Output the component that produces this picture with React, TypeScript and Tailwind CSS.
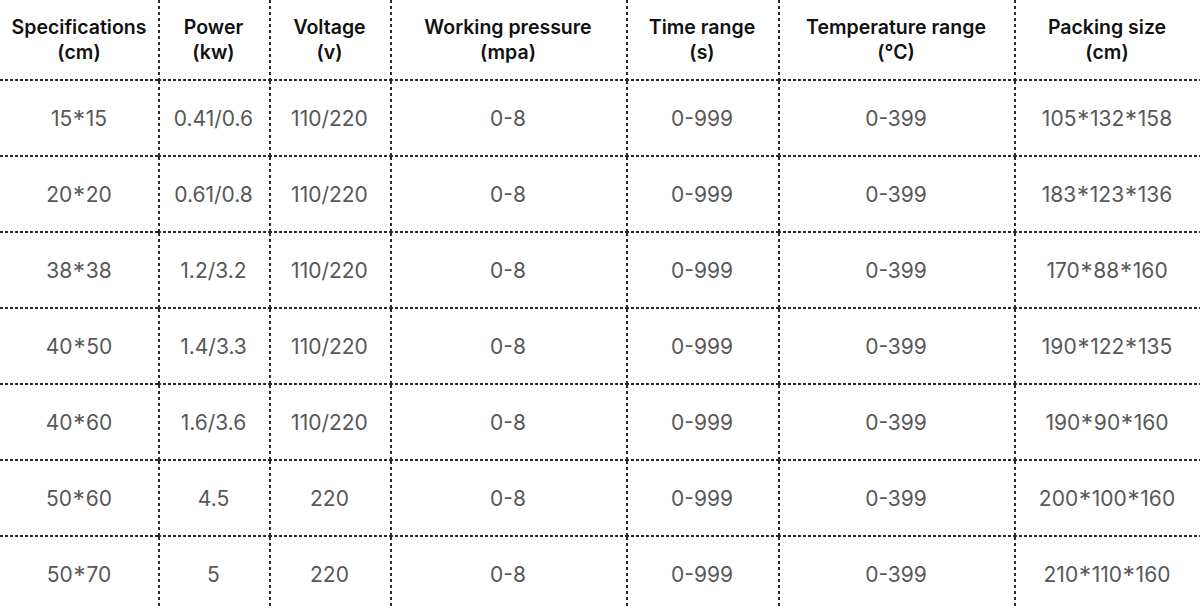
import React from "react";

const headers: [string, string][] = [
  ["Specifications", "(cm)"],
  ["Power", "(kw)"],
  ["Voltage", "(v)"],
  ["Working pressure", "(mpa)"],
  ["Time range", "(s)"],
  ["Temperature range", "(°C)"],
  ["Packing size", "(cm)"],
];

const rows: string[][] = [
  ["15*15", "0.41/0.6", "110/220", "0-8", "0-999", "0-399", "105*132*158"],
  ["20*20", "0.61/0.8", "110/220", "0-8", "0-999", "0-399", "183*123*136"],
  ["38*38", "1.2/3.2", "110/220", "0-8", "0-999", "0-399", "170*88*160"],
  ["40*50", "1.4/3.3", "110/220", "0-8", "0-999", "0-399", "190*122*135"],
  ["40*60", "1.6/3.6", "110/220", "0-8", "0-999", "0-399", "190*90*160"],
  ["50*60", "4.5", "220", "0-8", "0-999", "0-399", "200*100*160"],
  ["50*70", "5", "220", "0-8", "0-999", "0-399", "210*110*160"],
];

const widths = ["w-[158px]", "w-[111px]", "w-[121px]", "w-[236px]", "w-[152px]", "w-[236px]", "w-[186px]"];

// dotted line backgrounds
const bottomLeft =
  "[background:repeating-linear-gradient(to_right,#2a2a2a_0_3px,transparent_3px_5px)_left_bottom/100%_2px_no-repeat,repeating-linear-gradient(to_bottom,#2a2a2a_0_3px,transparent_3px_6px)_left_top/2px_100%_no-repeat]";
const bottomOnly =
  "[background:repeating-linear-gradient(to_right,#2a2a2a_0_3px,transparent_3px_5px)_left_bottom/100%_2px_no-repeat]";
const leftOnly =
  "[background:repeating-linear-gradient(to_bottom,#2a2a2a_0_3px,transparent_3px_6px)_left_top/2px_100%_no-repeat]";

function Value({ text }: { text: string }) {
  const parts = text.split("*");
  return (
    <>
      {parts.map((p, i) => (
        <React.Fragment key={i}>
          {i > 0 && <span className="relative -top-[3px]">*</span>}
          {p}
        </React.Fragment>
      ))}
    </>
  );
}

export default function App() {
  return (
    <div className="w-[1200px] h-[609px] overflow-hidden bg-white font-['Inter',sans-serif]">
      <table className="w-[1200px] table-fixed border-collapse">
        <colgroup>
          {widths.map((w, i) => (
            <col key={i} className={w} />
          ))}
        </colgroup>
        <thead>
          <tr className="h-[81px]">
            {headers.map(([a, b], i) => (
              <th
                key={i}
                className={`p-0 pb-[2px] text-center align-middle text-[19.5px] font-semibold leading-[25px] text-[#111] ${i > 0 ? bottomLeft : bottomOnly}`}
              >
                <div>{a}</div>
                <div>{b}</div>
              </th>
            ))}
          </tr>
        </thead>
        <tbody>
          {rows.map((r, ri) => {
            const last = ri === rows.length - 1;
            return (
              <tr key={ri} className="h-[76px]">
                {r.map((c, ci) => {
                  const bg = last ? (ci > 0 ? leftOnly : "") : ci > 0 ? bottomLeft : bottomOnly;
                  return (
                    <td
                      key={ci}
                      className={`p-0 text-center align-middle text-[21px] leading-[24px] text-[#585858] ${bg}`}
                    >
                      <Value text={c} />
                    </td>
                  );
                })}
              </tr>
            );
          })}
        </tbody>
      </table>
    </div>
  );
}
